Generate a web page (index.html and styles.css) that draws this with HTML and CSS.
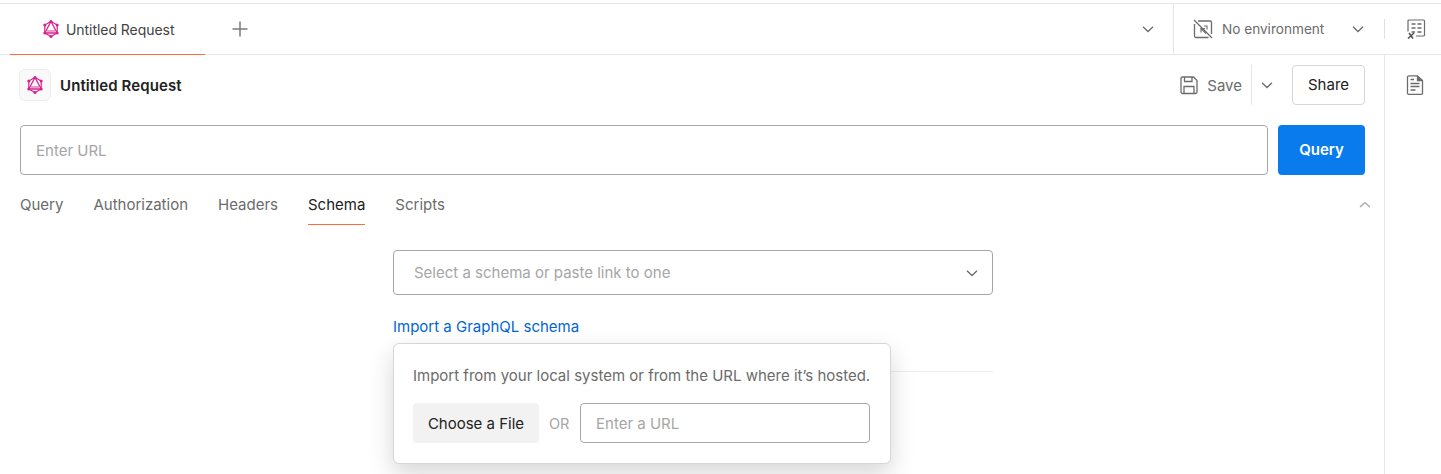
FILE: index.html
```html
<!DOCTYPE html>
<html lang="en">
<head>
<meta charset="utf-8">
<title>Untitled Request</title>
<link rel="stylesheet" href="styles.css">
</head>
<body>
<svg class="defs" width="0" height="0" aria-hidden="true">
  <defs>
    <g id="gql" fill="none" stroke="#d6218f">
      <path d="M9 1.500 15.200 5V13L9 16.500 2.800 13V5Z" stroke-width="1.200"/>
      <path d="M9 1.500 15.200 13H2.800Z" stroke-width="1.300"/>
      <path d="M5 11H13" stroke-width=".9"/>
      <g fill="#d6218f" stroke="none">
        <circle cx="9" cy="1.500" r="1.500"/><circle cx="15.200" cy="5" r="1.500"/><circle cx="15.200" cy="13" r="1.500"/>
        <circle cx="9" cy="16.500" r="1.500"/><circle cx="2.800" cy="13" r="1.500"/><circle cx="2.800" cy="5" r="1.500"/>
      </g>
    </g>
    <path id="chev" d="M3 5.800 8 10.500 13 5.800" fill="none" stroke="#6b6b6b" stroke-width="1.300"/>
  </defs>
</svg>
<div class="topline"></div>
<header class="tabbar">
  <div class="tab">
    <svg class="icon18" viewBox="0 0 18 18"><use href="#gql"/></svg>
    <span>Untitled Request</span>
  </div>
  <svg class="plus" viewBox="0 0 16 16"><path d="M8 .5V15.500M.5 8H15.500" stroke="#7a7a7a" stroke-width="1.500" fill="none"/></svg>
  <div class="spacer"></div>
  <svg class="icon16 tabs-chev" viewBox="0 0 16 16"><use href="#chev"/></svg>
  <div class="env">
    <svg class="env-icon" viewBox="0 0 20 20" fill="none" stroke="#6b6b6b" stroke-width="1.300">
      <path d="M5 2H17A1.500 1.500 0 0 1 18.500 3.500V15M15.500 18.500H3A1.500 1.500 0 0 1 1.500 17V5"/>
      <path d="M1 1 19 19"/>
      <path d="M8 13.500V9.500H12M7.500 9 13 14.500M11 7H14V10.500" stroke-width="1.100"/>
    </svg>
    <span class="env-label">No environment</span>
    <svg class="icon16" viewBox="0 0 16 16"><use href="#chev"/></svg>
  </div>
  <div class="vsep"></div>
  <div class="side-slot">
    <svg class="icon20" viewBox="0 0 20 20" fill="none" stroke="#6b6b6b" stroke-width="1.200">
      <path d="M2 12.500V2A1 1 0 0 1 3 1H17.500A1 1 0 0 1 18.500 2V16A1 1 0 0 1 17.500 17H10"/>
      <path d="M5.500 5H9.500M11.500 5H15.500M5.500 9H9.500M11.500 9H15.500M11.500 13H15.500M5.500 13H9" stroke-width="1.300"/>
      <path d="M3 14 7 19.500M8 14 2 19.500" stroke-width="1.600" stroke="#555"/>
    </svg>
  </div>
</header>
<div class="workspace">
  <main class="content">
    <div class="titlerow">
      <div class="titlebadge"><svg class="icon18" viewBox="0 0 18 18"><use href="#gql"/></svg></div>
      <h1 class="title">Untitled Request</h1>
      <div class="spacer"></div>
      <svg class="icon20" viewBox="0 0 20 20" fill="none" stroke="#6b6b6b" stroke-width="1.300">
        <path d="M2 3.500A1.500 1.500 0 0 1 3.500 2H14.500L18 5.500V17A1.500 1.500 0 0 1 16.500 18.500H3.500A1.500 1.500 0 0 1 2 17Z"/>
        <path d="M5.500 2V6.500H13V2M5 18.500V11.500H15V18.500"/>
      </svg>
      <span class="save">Save</span>
      <div class="save-more"><svg class="icon16" viewBox="0 0 16 16"><use href="#chev"/></svg></div>
      <button class="share">Share</button>
    </div>
    <div class="urlrow">
      <div class="urlinput">Enter URL</div>
      <button class="query">Query</button>
    </div>
    <nav class="subtabs">
      <span class="subtab">Query</span>
      <span class="subtab">Authorization</span>
      <span class="subtab">Headers</span>
      <span class="subtab active">Schema</span>
      <span class="subtab">Scripts</span>
      <svg class="collapse" viewBox="0 0 16 16"><path d="M3 10 8 5.500 13 10" fill="none" stroke="#a6a6a6" stroke-width="1.300"/></svg>
    </nav>
    <section class="schema">
      <div class="schema-box">
        <div class="select">
          <span>Select a schema or paste link to one</span>
          <svg class="icon16" viewBox="0 0 16 16"><use href="#chev"/></svg>
        </div>
        <a class="link">Import a GraphQL schema</a>
        <div class="divider"></div>
        <div class="popover">
          <p class="pop-text">Import from your local system or from the URL where it’s hosted.</p>
          <div class="pop-row">
            <button class="file">Choose a File</button>
            <span class="or">OR</span>
            <div class="popinput">Enter a URL</div>
          </div>
        </div>
      </div>
    </section>
  </main>
  <aside class="sidebar">
    <svg class="icon20" viewBox="0 0 20 20" fill="none" stroke="#6b6b6b" stroke-width="1.300">
      <path d="M4 .8H12.500L17.500 5.500V18A1.200 1.200 0 0 1 16.300 19.300H3.700A1.200 1.200 0 0 1 2.500 18V2.300A1.500 1.500 0 0 1 4 .8Z"/>
      <path d="M12.500 1V5.500H17.500" fill="#6b6b6b"/>
      <path d="M5.500 4.500H9M5.500 8.500H14.500M5.500 11.500H14.500M5.500 15H10.500" stroke-width="1.400"/>
    </svg>
  </aside>
</div>
</body>
</html>
```
FILE: styles.css
```css
* { box-sizing: border-box; }
html, body { margin: 0; height: 100%; }
body {
  height: 474px;
  overflow: hidden;
  background: #fff;
  color: #212121;
  font-family: Inter, "Liberation Sans", sans-serif;
  font-size: 15px;
}
.defs { position: absolute; }
.topline { height: 4px; background: #fff; border-bottom: 1px solid #e6e6e6; }
.spacer { flex: 1; }
.icon16 { width: 16px; height: 16px; flex: none; display: block; }
.icon18 { width: 18px; height: 18px; flex: none; display: block; }
.icon20 { width: 20px; height: 20px; flex: none; display: block; }

.tabbar {
  height: 51px;
  display: flex;
  align-items: center;
  border-bottom: 1px solid #e6e6e6;
}
.tab {
  margin-left: 10px;
  width: 195px;
  height: 51px;
  margin-bottom: -1px;
  padding-left: 32px;
  display: flex;
  align-items: center;
  gap: 6px;
  color: #424242;
  font-size: 14px;
  letter-spacing: -.05px;
  border-bottom: 1px solid #ff6c37;
}
.plus { width: 16px; height: 16px; margin-left: 27px; flex: none; }
.tabs-chev { margin-right: 17px; }
.env {
  width: 211px;
  height: 50px;
  padding: 0 18px 0 19px;
  display: flex;
  align-items: center;
  border-left: 1px solid #e6e6e6;
}
.env-icon { width: 20px; height: 20px; flex: none; }
.env-label { margin-left: 9px; flex: 1; color: #6b6b6b; font-size: 13.6px; }
.vsep { width: 1px; height: 20px; background: #e0e0e0; }
.side-slot { width: 56px; padding-left: 5px; display: flex; justify-content: center; }

.workspace { height: 419px; display: flex; }
.content { flex: 1; min-width: 0; padding: 0 19px 0 20px; display: flex; flex-direction: column; }
.sidebar {
  width: 57px;
  border-left: 1px solid #e6e6e6;
  padding: 20px 0 0 20px;
}

.titlerow { height: 60px; display: flex; align-items: center; }
.titlebadge {
  width: 32px;
  height: 32px;
  margin-left: -1px;
  background: #f9f9f9;
  border: 1px solid #ededed;
  border-radius: 6px;
  display: flex;
  align-items: center;
  justify-content: center;
}
.title { margin: 0 0 0 9px; font-size: 15px; font-weight: 600; letter-spacing: .1px; color: #212121; }
.save { margin-left: 8px; color: #6b6b6b; }
.save-more {
  width: 25px;
  height: 40px;
  margin: 0 16px 0 9px;
  padding-left: 7px;
  border-left: 1px solid #e6e6e6;
  display: flex;
  align-items: center;
}
.share {
  width: 73px;
  height: 40px;
  padding: 0 0 2px;
  background: #fff;
  border: 1px solid #d6d6d6;
  border-radius: 4px;
  color: #212121;
  font: inherit;
}

.urlrow { margin-top: 10px; height: 50px; display: flex; gap: 10px; }
.urlinput {
  flex: 1;
  padding-left: 15px;
  display: flex;
  align-items: center;
  border: 1px solid #a6a6a6;
  border-radius: 4px;
  color: #a6a6a6;
}
.query {
  width: 87px;
  padding: 0 0 2px;
  background: #097bed;
  border: 0;
  border-radius: 4px;
  color: #fff;
  font: inherit;
  font-weight: 600;
}

.subtabs { margin-top: 9px; height: 41px; display: flex; align-items: stretch; gap: 30px; }
.subtab { padding-top: 12px; color: #6b6b6b; line-height: 17px; }
.subtab.active { color: #212121; border-bottom: 1px solid #ff6c37; }
.collapse { width: 16px; height: 16px; margin: 13px -8px 0 auto; }

.schema { flex: 1; display: flex; justify-content: center; padding-top: 25px; }
.schema-box { width: 600px; position: relative; margin-left: 1px; }
.select {
  height: 45px;
  padding: 0 12px 0 20px;
  display: flex;
  align-items: center;
  justify-content: space-between;
  border: 1px solid #a6a6a6;
  border-radius: 4px;
  color: #a6a6a6;
}
.link { display: block; margin-top: 23px; line-height: 17px; color: #0265d2; }
.divider { margin-top: 36px; height: 1px; background: #ededed; }
.popover {
  position: absolute;
  left: 0;
  top: 93px;
  width: 498px;
  height: 121px;
  padding: 23px 19px 0;
  background: #fff;
  border: 1px solid #d6d6d6;
  border-radius: 6px;
  box-shadow: 0 10px 24px rgba(0, 0, 0, .16);
}
.pop-text { margin: 0; line-height: 17px; color: #6b6b6b; white-space: nowrap; }
.pop-row { margin-top: 19px; height: 40px; display: flex; align-items: center; }
.file {
  width: 126px;
  height: 40px;
  padding: 0;
  background: #f2f2f2;
  border: 0;
  border-radius: 4px;
  color: #212121;
  font: inherit;
}
.or { margin-left: 10px; width: 31px; color: #a6a6a6; font-size: 14.5px; }
.popinput {
  width: 290px;
  height: 40px;
  padding-left: 15px;
  display: flex;
  align-items: center;
  border: 1px solid #a6a6a6;
  border-radius: 4px;
  color: #a6a6a6;
}
```
